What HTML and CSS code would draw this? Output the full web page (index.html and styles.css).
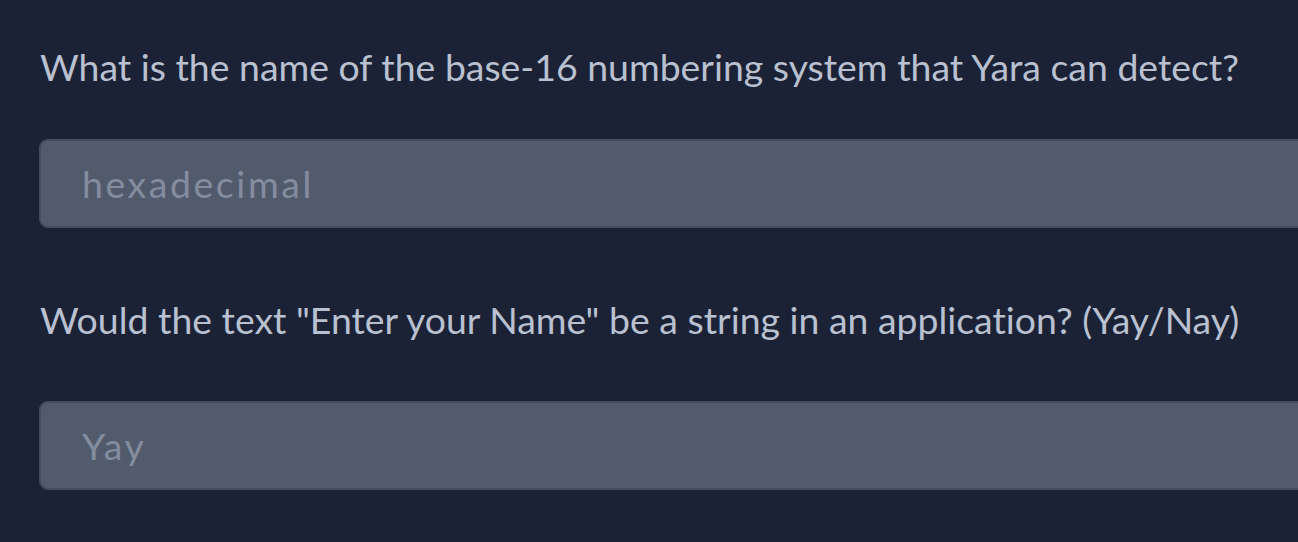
FILE: index.html
```html
<!DOCTYPE html>
<html>
<head>
<meta charset="utf-8">
<link rel="stylesheet" href="styles.css">
</head>
<body>
<div class="quiz">
  <div class="question first">
    <label class="q-label">What is the name of the base-16 numbering system that Yara can detect?</label>
    <input class="q-input" type="text" placeholder="hexadecimal">
  </div>
  <div class="question second">
    <label class="q-label">Would the text "Enter your Name" be a string in an application? (Yay/Nay)</label>
    <input class="q-input" type="text" placeholder="Yay">
  </div>
</div>
</body>
</html>
```
FILE: styles.css
```css
html, body {
  margin: 0;
  padding: 0;
  background: #1c2236;
  overflow: hidden;
  height: 100%;
}
.quiz {
  padding: 41px 0 0 40px;
  font-family: Lato, "Source Sans Pro", sans-serif;
  font-variant-ligatures: none;
}
.question {
  display: flex;
  flex-direction: column;
}
.first {
  margin-bottom: 66px;
}
.q-label {
  color: #b9c1d0;
  font-size: 37.4px;
  line-height: 52px;
  margin-bottom: 46px;
}
.second .q-label {
  margin-bottom: 55px;
}
.q-input {
  box-sizing: border-box;
  width: 1320px;
  height: 89px;
  margin-left: -1px;
  background: #525b6c;
  border: 2px solid #444c5d;
  border-radius: 9px;
  padding: 0 0 0 41px;
  font-family: Lato, sans-serif;
  font-size: 37.4px;
  color: #c0c7d4;
  outline: none;
}
.q-input::placeholder {
  color: #848d9f;
  letter-spacing: 2.6px;
}
```
